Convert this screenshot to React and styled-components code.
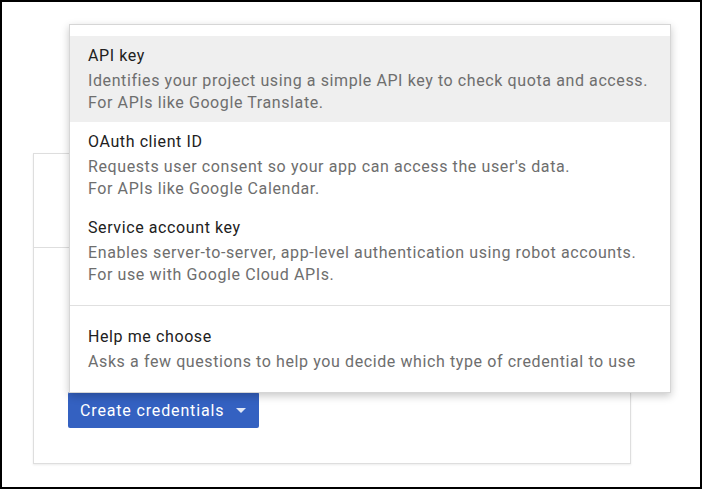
import styled, { createGlobalStyle } from 'styled-components';

const GlobalStyle = createGlobalStyle`
  html, body {
    margin: 0;
    padding: 0;
    background: #fff;
  }
  body {
    font-family: Roboto, "Liberation Sans", Arial, sans-serif;
  }
`;

const Frame = styled.div`
  position: relative;
  width: 702px;
  height: 489px;
  box-sizing: border-box;
  border: 2px solid #000;
  background: #fff;
  padding: 151px 0 0 31px;
`;

const Card = styled.div`
  width: 598px;
  height: 311px;
  box-sizing: border-box;
  border: 1px solid #dedede;
  box-shadow: 0 1px 2px rgba(0, 0, 0, 0.08);
  background: #fff;
`;

const CardHeader = styled.div`
  height: 93px;
  border-bottom: 1px solid #dedede;
`;

const CardBody = styled.div`
  padding: 144px 0 0 34px;
`;

const ButtonWrap = styled.div`
  position: relative;
  display: inline-block;
`;

const Button = styled.button`
  display: flex;
  align-items: center;
  gap: 12px;
  height: 36px;
  padding: 0 13px 0 12px;
  border: none;
  border-radius: 2px;
  background: #3461c1;
  color: #fff;
  font-family: Roboto, "Liberation Sans", Arial, sans-serif;
  font-size: 16px;
  letter-spacing: 0.85px;
  cursor: pointer;
`;

const Caret = styled.span`
  width: 0;
  height: 0;
  border-left: 5px solid transparent;
  border-right: 5px solid transparent;
  border-top: 5px solid rgba(255, 255, 255, 0.85);
  margin-top: 1px;
`;

const Menu = styled.div`
  position: absolute;
  left: 1px;
  bottom: 35px;
  width: 602px;
  box-sizing: border-box;
  padding: 11px 0;
  background: #fff;
  border: 1px solid rgba(0, 0, 0, 0.16);
  box-shadow: 0 3px 8px rgba(0, 0, 0, 0.22);
  z-index: 2;
`;

const Item = styled.div`
  padding: 8px 18px;
  background: ${(p) => (p.$active ? '#efefef' : 'transparent')};
`;

const Title = styled.div`
  font-size: 16px;
  line-height: 24px;
  letter-spacing: 0.6px;
  color: #212121;
`;

const Desc = styled.div`
  margin-top: 2px;
  font-size: 16px;
  line-height: 22px;
  letter-spacing: 0.6px;
  color: #6e6e6e;
`;

const Divider = styled.div`
  height: 1px;
  margin: 11px 0;
  background: #e0e0e0;
`;

const options = [
  {
    title: 'API key',
    lines: [
      'Identifies your project using a simple API key to check quota and access.',
      'For APIs like Google Translate.',
    ],
    active: true,
  },
  {
    title: 'OAuth client ID',
    lines: [
      "Requests user consent so your app can access the user's data.",
      'For APIs like Google Calendar.',
    ],
  },
  {
    title: 'Service account key',
    lines: [
      'Enables server-to-server, app-level authentication using robot accounts.',
      'For use with Google Cloud APIs.',
    ],
  },
];

const MenuItem = ({ title, lines, active }) => (
  <Item $active={active}>
    <Title>{title}</Title>
    <Desc>
      {lines.map((line) => (
        <div key={line}>{line}</div>
      ))}
    </Desc>
  </Item>
);

export default function App() {
  return (
    <>
      <GlobalStyle />
      <Frame>
        <Card>
          <CardHeader />
          <CardBody>
            <ButtonWrap>
              <Menu>
                {options.map((o) => (
                  <MenuItem key={o.title} {...o} />
                ))}
                <Divider />
                <MenuItem
                  title="Help me choose"
                  lines={['Asks a few questions to help you decide which type of credential to use']}
                />
              </Menu>
              <Button>
                Create credentials
                <Caret />
              </Button>
            </ButtonWrap>
          </CardBody>
        </Card>
      </Frame>
    </>
  );
}
